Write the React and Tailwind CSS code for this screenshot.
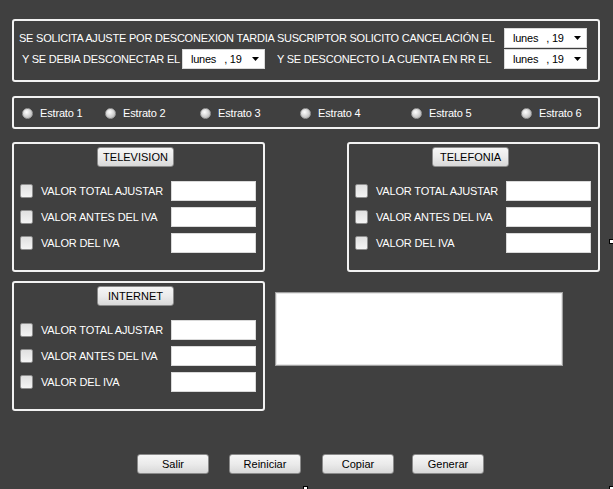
import React from "react";

const font = { fontFamily: '"Liberation Sans", Arial, sans-serif' };

function Combo() {
  return (
    <div className="flex items-center w-[83px] h-[20px] bg-white border border-[#d9d9d9] text-black text-[11px] pl-[8px] pr-[5px] whitespace-nowrap">
      <span>lunes</span>
      <span className="ml-[8px]">, 19</span>
      <svg className="ml-auto" width="7" height="4" viewBox="0 0 7 4">
        <path d="M0 0h7L3.5 4z" fill="#000" />
      </svg>
    </div>
  );
}

function Radio({ label, className }) {
  return (
    <div className={"flex items-center whitespace-nowrap " + className}>
      <span className="w-[11px] h-[11px] rounded-full border border-[#9a9a9a] bg-[radial-gradient(circle_at_40%_35%,#ffffff,#c4c4c4_70%,#a8a8a8)]" />
      <span className="ml-[7px] text-white text-[11px] tracking-[-0.015em]">{label}</span>
    </div>
  );
}

function WinButton({ children, className }) {
  return (
    <div className={"flex items-center justify-center h-[20px] border border-[#8a8a8a] rounded-[3px] bg-gradient-to-b from-[#f6f6f6] via-[#ebebeb] to-[#d8d8d8] text-black text-[11px] whitespace-nowrap " + className}>
      {children}
    </div>
  );
}

function Row({ label }) {
  return (
    <div className="flex items-center h-[20px]">
      <span className="w-[13px] h-[14px] rounded-[2px] border border-[#8e8e8e] bg-gradient-to-b from-[#e0e0e0] to-[#f4f4f4]" />
      <span className="ml-[8px] text-white text-[11px] tracking-[-0.015em] whitespace-nowrap">{label}</span>
      <div className="ml-auto w-[85px] h-[20px] bg-white border border-[#d9d9d9]" />
    </div>
  );
}

function ServiceGroup({ title, className }) {
  return (
    <div className={"w-[253px] h-[130px] border-2 border-[#f2f2f2] rounded-[3px] flex flex-col pl-[6px] pr-[7px] " + (className || "")}>
      <div className="flex mt-[3px] ml-[77px]">
        <WinButton className="w-[77px]">{title}</WinButton>
      </div>
      <div className="flex flex-col gap-[6px] mt-[14px]">
        <Row label="VALOR TOTAL AJUSTAR" />
        <Row label="VALOR ANTES DEL IVA" />
        <Row label="VALOR DEL IVA" />
      </div>
    </div>
  );
}

export default function App() {
  return (
    <div style={font} className="relative w-[613px] h-[489px] bg-[#404040] overflow-hidden">
      <div className="flex flex-col pt-[19px] pl-[12px] w-[600px]">
        {/* fechas */}
        <div className="h-[63px] border-2 border-[#f2f2f2] rounded-[3px] flex flex-col pt-[7px] pr-[11px] text-white text-[11px] tracking-[-0.02em] whitespace-nowrap">
          <div className="flex items-center h-[20px]">
            <span className="ml-[5px]">SE SOLICITA AJUSTE POR DESCONEXION TARDIA SUSCRIPTOR SOLICITO CANCELACIÓN EL</span>
            <div className="ml-auto"><Combo /></div>
          </div>
          <div className="flex items-center h-[20px] mt-[1px]">
            <span className="ml-[8px]">Y SE DEBIA DESCONECTAR EL</span>
            <div className="ml-[2px]"><Combo /></div>
            <span className="ml-[12px]">Y SE DESCONECTO LA CUENTA EN RR EL</span>
            <div className="ml-auto"><Combo /></div>
          </div>
        </div>

        {/* estratos */}
        <div className="mt-[14px] h-[33px] border-2 border-[#f2f2f2] rounded-[3px] flex items-center pt-[2px] pl-[8px]">
          <Radio label="Estrato 1" className="w-[83px]" />
          <Radio label="Estrato 2" className="w-[95px]" />
          <Radio label="Estrato 3" className="w-[100px]" />
          <Radio label="Estrato 4" className="w-[111px]" />
          <Radio label="Estrato 5" className="w-[110px]" />
          <Radio label="Estrato 6" />
        </div>

        <div className="flex justify-between mt-[13px]">
          <ServiceGroup title="TELEVISION" />
          <ServiceGroup title="TELEFONIA" />
        </div>

        <div className="flex mt-[9px]">
          <ServiceGroup title="INTERNET" />
          <div className="ml-[10px] mt-[11px] w-[288px] h-[74px] bg-white border border-[#a0a0a0] shadow-[inset_0_0_0_1px_#e6e6e6]" />
        </div>

        <div className="flex mt-[43px] pl-[125px]">
          <WinButton className="w-[72px]">Salir</WinButton>
          <WinButton className="w-[72px] ml-[20px]">Reiniciar</WinButton>
          <WinButton className="w-[72px] ml-[21px]">Copiar</WinButton>
          <WinButton className="w-[72px] ml-[18px]">Generar</WinButton>
        </div>
      </div>

      {/* resize handles */}
      <span className="absolute left-[303px] top-[486px] w-[5px] h-[5px] bg-white border border-black" />
      <span className="absolute left-[609px] top-[486px] w-[5px] h-[5px] bg-white border border-black" />
      <span className="absolute left-[609px] top-[239px] w-[5px] h-[5px] bg-white border border-black" />
    </div>
  );
}
